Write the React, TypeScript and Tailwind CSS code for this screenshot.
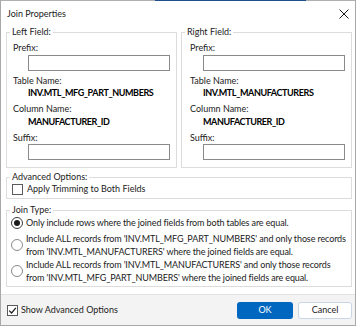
import React from "react";

function Group({ title, className, children }: { title: string; className?: string; children: React.ReactNode }) {
  return (
    <fieldset className={`min-w-0 border border-[#dcdcdc] ${className ?? ""}`}>
      <legend className="ml-[3px] px-[2px] leading-[12px] text-[#1b1b1b]">{title}</legend>
      {children}
    </fieldset>
  );
}

function FieldGroup({ title, table, column, pad, indent }: { title: string; table: string; column: string; pad: string; indent: string }) {
  return (
    <Group title={title} className="flex-1">
      <div className={`pb-[7px] pr-[6px] ${pad}`}>
        <div className="mt-[3px] leading-[14px]">Prefix:</div>
        <div className={`${indent} h-[16px] border border-[#8a8a8a] bg-white`} />
        <div className="mt-[3px] leading-[14px]">Table Name:</div>
        <div className={`${indent} font-bold leading-[10px] tracking-[-0.4px] text-black`}>{table}</div>
        <div className="mt-[4px] leading-[14px]">Column Name:</div>
        <div className={`${indent} font-bold leading-[12px] tracking-[-0.4px] text-black`}>{column}</div>
        <div className="mt-[3px] leading-[13px]">Suffix:</div>
        <div className={`${indent} h-[16px] border border-[#8a8a8a] bg-white`} />
      </div>
    </Group>
  );
}

function Radio({ checked, children }: { checked?: boolean; children: React.ReactNode }) {
  return (
    <div className="flex items-center">
      <span className={`ml-[4px] mr-[3px] flex h-[12px] w-[12px] shrink-0 items-center justify-center rounded-full border bg-white ${checked ? "border-[#3a3a3a]" : "border-[#8a8a8a]"}`}>
        {checked && <span className="h-[6px] w-[6px] rounded-full bg-[#1b1b1b]" />}
      </span>
      <div className="whitespace-nowrap leading-[13px] tracking-[-0.12px]">{children}</div>
    </div>
  );
}

function Check({ checked }: { checked?: boolean }) {
  return (
    <span className="flex h-[11px] w-[11px] shrink-0 items-center justify-center border border-[#5a5a5a] bg-white">
      {checked && (
        <svg width="9" height="9" viewBox="0 0 9 9">
          <path d="M1.2 4.6 L3.6 7 L7.8 1.8" fill="none" stroke="#1b1b1b" strokeWidth="1.2" />
        </svg>
      )}
    </span>
  );
}

export default function App() {
  return (
    <div className="h-[326px] w-[358px] bg-white text-[9px] text-[#1b1b1b]" style={{ fontFamily: 'Lato, "Noto Sans", sans-serif' }}>
      <div className="flex h-[326px] w-[356px] flex-col border-b border-l border-r border-[#a8a8a8]">
        {/* top edge, partly blue from the window behind */}
        <div className="flex h-[1px] shrink-0">
          <div className="w-[154px] bg-[#b0b0b0]" />
          <div className="w-[151px] bg-[#1e4f8c]" />
          <div className="flex-1 bg-[#b0b0b0]" />
        </div>
        <div className="flex h-[25px] shrink-0 items-center justify-between pl-[6px] pr-[5px]">
          <span className="leading-[14px]">Join Properties</span>
          <svg width="10" height="10" viewBox="0 0 10 10" className="mr-[1px]">
            <path d="M0.5 0.5 L9.5 9.5 M9.5 0.5 L0.5 9.5" stroke="#1b1b1b" strokeWidth="1" />
          </svg>
        </div>

        <div className="flex shrink-0 flex-col pl-[5px] pr-[3px]">
          <div className="flex gap-[4px]">
            <FieldGroup title="Left Field:" table="INV.MTL_MFG_PART_NUMBERS" column="MANUFACTURER_ID" pad="pl-[6px]" indent="ml-[15px]" />
            <FieldGroup title="Right Field:" table="INV.MTL_MANUFACTURERS" column="MANUFACTURER_ID" pad="pl-[8px]" indent="ml-[13px]" />
          </div>

          <Group title="Advanced Options:" className="mt-[3px]">
            <div className="flex h-[12px] items-center pl-[5px] mb-[3px]">
              <Check />
              <span className="ml-[4px] leading-[12px]">Apply Trimming to Both Fields</span>
            </div>
          </Group>

          <Group title="Join Type:" className="mt-[5px]">
            <div className="pb-[2px]">
              <Radio checked>Only include rows where the joined fields from both tables are equal.</Radio>
              <div className="mt-[3px]">
                <Radio>
                  Include ALL records from 'INV.MTL_MFG_PART_NUMBERS' and only those records
                  <br />
                  from 'INV.MTL_MANUFACTURERS' where the joined fields are equal.
                </Radio>
              </div>
              <Radio>
                Include ALL records from 'INV.MTL_MANUFACTURERS' and only those records
                <br />
                from 'INV.MTL_MFG_PART_NUMBERS' where the joined fields are equal.
              </Radio>
            </div>
          </Group>
        </div>

        <div className="mt-auto flex h-[31px] shrink-0 items-center border-t border-[#e3e3e3] bg-[#f3f3f3] pl-[6px] pr-[3px]">
          <Check checked />
          <span className="ml-[3px] leading-[14px]">Show Advanced Options</span>
          <button className="ml-auto h-[17px] w-[56px] rounded-[3px] bg-[#0067c0] leading-[14px] text-white">OK</button>
          <button className="ml-[5px] h-[17px] w-[54px] rounded-[3px] border border-[#c9d6e6] bg-white leading-[14px] text-[#1b1b1b]">Cancel</button>
        </div>
      </div>
    </div>
  );
}
